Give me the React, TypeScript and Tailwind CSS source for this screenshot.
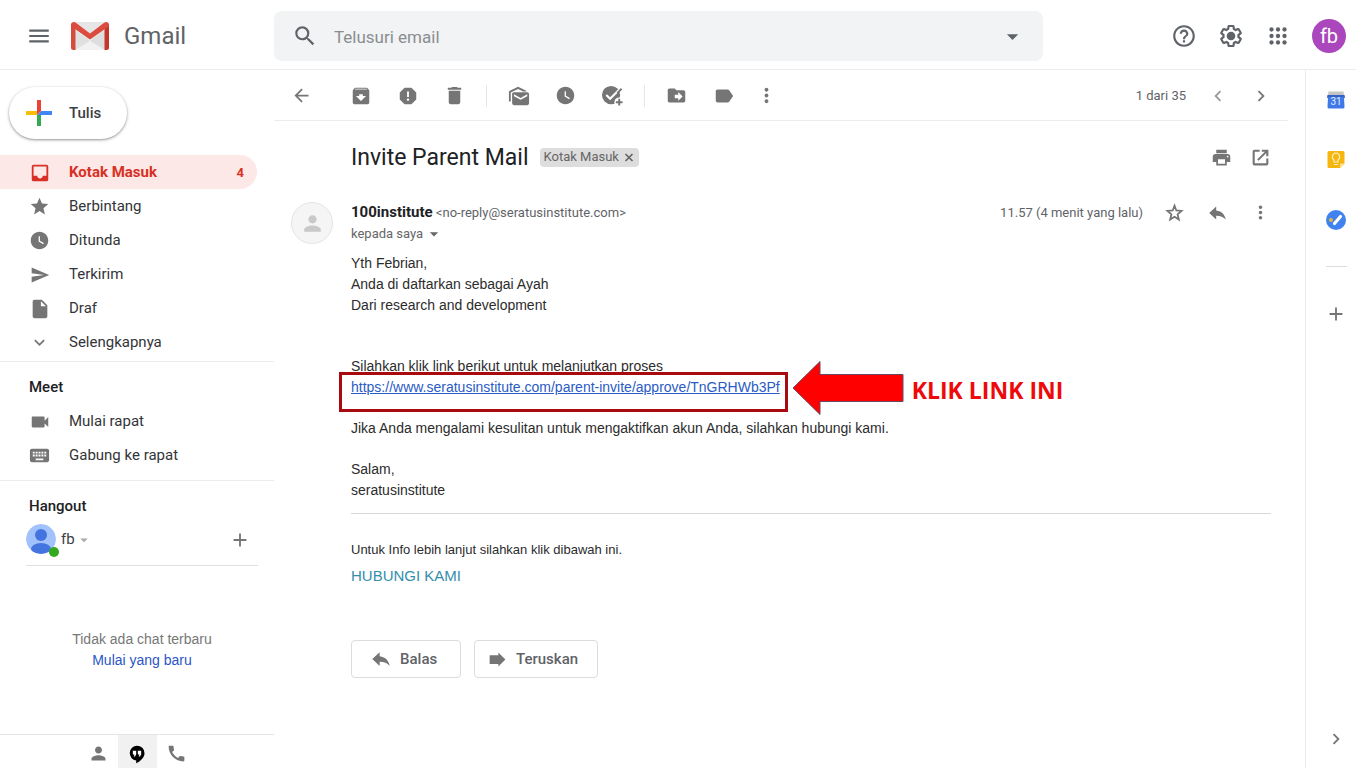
import type { ReactNode } from 'react';
import {
  MdAdd,
  MdArchive,
  MdArrowBack,
  MdArrowDropDown,
  MdCall,
  MdChevronLeft,
  MdChevronRight,
  MdDelete,
  MdDriveFileMove,
  MdExpandMore,
  MdHelpOutline,
  MdInbox,
  MdInsertDriveFile,
  MdKeyboard,
  MdLabel,
  MdMenu,
  MdMoreVert,
  MdPerson,
  MdPrint,
  MdReport,
  MdSearch,
  MdSend,
  MdStar,
  MdVideocam,
  MdWatchLater,
} from 'react-icons/md';

function GmailLogo() {
  return (
    <svg width="40" height="30" viewBox="0 0 40 30" aria-hidden="true">
      <path d="M3 1h34v28H3z" fill="#e6e6e6" />
      <path d="M5 29 20 17l15 12z" fill="#f2f2f2" />
      <path d="M5 9 20 20 5 29z" fill="#e0e0e0" />
      <path d="M35 9 20 20l15 9z" fill="#dedede" />
      <path d="M1 3.500v23A2.500 2.500 0 0 0 3.500 29H5.500V5z" fill="#d54b3d" />
      <path d="M39 3.500v23a2.500 2.500 0 0 1-2.500 2.500H34.500V5z" fill="#c5372c" />
      <path
        d="M1 3.500C1 1 4 .2 5.500 1.500L20 12.500 34.500 1.500C36 .2 39 1 39 3.500c0 1-.5 1.800-1.200 2.400L20 18.500 2.200 5.900C1.500 5.300 1 4.500 1 3.500z"
        fill="#dc4b3f"
      />
    </svg>
  );
}

function ComposePlus() {
  return (
    <svg width="26" height="26" viewBox="0 0 26 26" aria-hidden="true">
      <path d="M11 0h4v11l-4 4z" fill="#ea4335" />
      <path d="M0 11h11v4H0z" fill="#fbbc04" />
      <path d="M15 11h11v4H11z" fill="#4285f4" />
      <path d="M11 15h4v11h-4z" fill="#34a853" />
    </svg>
  );
}

function SettingsIcon() {
  return (
    <svg width="26" height="26" viewBox="0 0 24 24" fill="currentColor" aria-hidden="true">
      <path d="M13.850 22.250h-3.700c-.74 0-1.360-.54-1.450-1.270l-.27-1.890c-.27-.14-.53-.29-.79-.46l-1.800.72c-.7.26-1.470-.03-1.810-.65L2.200 15.530c-.35-.66-.2-1.440.36-1.880l1.530-1.190c-.01-.15-.02-.3-.02-.46 0-.15.01-.31.02-.46l-1.520-1.190c-.59-.45-.74-1.260-.37-1.880l1.850-3.190c.34-.62 1.110-.9 1.790-.63l1.810.73c.26-.17.52-.32.78-.46l.27-1.910c.09-.7.71-1.250 1.440-1.250h3.700c.74 0 1.360.54 1.450 1.270l.27 1.890c.27.14.53.29.79.46l1.800-.72c.71-.26 1.480.03 1.820.65l1.840 3.180c.36.66.2 1.440-.36 1.880l-1.520 1.190c.01.15.02.3.02.46s-.01.31-.02.46l1.520 1.190c.56.45.72 1.230.37 1.860l-1.860 3.220c-.34.62-1.110.9-1.800.63l-1.800-.72c-.26.17-.52.32-.78.46l-.27 1.910c-.1.68-.72 1.220-1.460 1.220zm-3.230-2h2.760l.37-2.550.53-.22c.44-.18.88-.44 1.340-.78l.45-.34 2.380.96 1.380-2.400-2.030-1.580.07-.56c.03-.26.06-.51.06-.78s-.03-.53-.06-.78l-.07-.56 2.030-1.580-1.390-2.400-2.390.96-.45-.35c-.42-.32-.87-.58-1.330-.77l-.52-.22-.37-2.550h-2.760l-.37 2.550-.53.21c-.44.19-.88.44-1.340.79l-.45.33-2.380-.95-1.390 2.390 2.030 1.580-.07.56a7 7 0 0 0-.06.79c0 .26.02.53.06.78l.07.56-2.030 1.580 1.380 2.400 2.390-.96.45.35c.43.33.86.58 1.330.77l.53.22.38 2.550z" />
      <circle cx="12" cy="12" r="4" />
    </svg>
  );
}

function AppsIcon() {
  return (
    <svg width="26" height="26" viewBox="0 0 24 24" fill="currentColor" aria-hidden="true">
      {[6, 12, 18].map((y) => [6, 12, 18].map((x) => <circle key={`${x}-${y}`} cx={x} cy={y} r="2" />))}
    </svg>
  );
}

function UnreadIcon() {
  return (
    <svg width="22" height="22" viewBox="0 0 24 24" fill="currentColor" aria-hidden="true">
      <path d="M1 8c0-.7.400-1.300 1-1.600L11 2l9 4.400V7h-3.500L11 4.300 3 8.200V18H1z" />
      <path d="M6.500 8h14.500a2 2 0 0 1 2 2v10a2 2 0 0 1-2 2H6.500a2 2 0 0 1-2-2V10c0-1.100.9-2 2-2zm14.500 4.200v-2l-7.200 4-7.300-4v2l7.300 4z" />
    </svg>
  );
}

function AddTaskIcon() {
  return (
    <svg width="23" height="23" viewBox="0 0 24 24" aria-hidden="true">
      <circle cx="10.500" cy="11.500" r="9.500" fill="currentColor" />
      <path d="M5.500 11.500 9.500 15.500 21 4" fill="none" stroke="#fff" strokeWidth="2.200" />
      <path d="m17 9.500 4.500-4.500" stroke="currentColor" strokeWidth="2" />
      <circle cx="19" cy="19" r="5" fill="#fff" />
      <path d="M19 15.500v7M15.500 19h7" stroke="currentColor" strokeWidth="2" />
    </svg>
  );
}

function OpenInNewIcon() {
  return (
    <svg width="21" height="21" viewBox="0 0 24 24" fill="none" stroke="currentColor" strokeWidth="2.400" aria-hidden="true">
      <path d="M11 4.200H5.200a1 1 0 0 0-1 1v13.600a1 1 0 0 0 1 1h13.600a1 1 0 0 0 1-1V13" />
      <path d="M13.500 4.200h6.300v6.300M19 5 9 15" />
    </svg>
  );
}

function StarOutlineIcon() {
  return (
    <svg width="21" height="21" viewBox="0 0 24 24" fill="none" stroke="currentColor" strokeWidth="2" aria-hidden="true">
      <path d="m12 4.200 2.100 5.500 6 .5-4.600 3.900 1.500 5.900-5-3.200-5 3.200 1.500-5.900-4.600-3.900 6-.5z" />
    </svg>
  );
}

function ReplyIcon() {
  return (
    <svg width="22" height="22" viewBox="0 0 24 24" fill="currentColor" aria-hidden="true">
      <path d="M10.500 9V4.500L2.500 12l8 7.500V15c5 0 8.300 1.300 11 4.500-1-5.300-4.200-9.700-11-10.500z" />
    </svg>
  );
}

function ForwardIcon() {
  return (
    <svg width="21" height="21" viewBox="0 0 24 24" fill="currentColor" aria-hidden="true">
      <path d="M3 7h10V4l8 8-8 8v-3H3z" />
    </svg>
  );
}

function CloseIcon() {
  return (
    <svg width="12" height="12" viewBox="0 0 12 12" aria-hidden="true">
      <path d="m2.500 3 7 7M9.500 3l-7 7" stroke="currentColor" strokeWidth="1.700" />
    </svg>
  );
}

function HangoutsIcon() {
  return (
    <svg width="20" height="20" viewBox="0 0 24 24" aria-hidden="true">
      <path d="M12 2a9 9 0 0 0-1 17.900V23c4.500-2 10-6.500 10-12A9 9 0 0 0 12 2z" fill="#000" />
      <path d="M7 8h4v4.500L9.500 15H8l1-2.500H7zM13 8h4v4.500L15.500 15H14l1-2.500h-2z" fill="#fff" />
    </svg>
  );
}

function HangoutAvatar() {
  return (
    <svg width="34" height="34" viewBox="0 0 34 34" aria-hidden="true">
      <clipPath id="hangout-avatar">
        <circle cx="15" cy="16" r="15" />
      </clipPath>
      <g clipPath="url(#hangout-avatar)">
        <circle cx="15" cy="16" r="15" fill="#a1c2fa" />
        <circle cx="15" cy="12" r="6" fill="#4374e0" />
        <ellipse cx="15" cy="26" rx="10" ry="6" fill="#4374e0" />
      </g>
      <circle cx="28" cy="29" r="5" fill="#34a81f" />
    </svg>
  );
}

function CalendarIcon() {
  return (
    <svg width="20" height="20" viewBox="0 0 20 20" aria-hidden="true">
      <path d="M2.500 1.500h15l.5 4H2z" fill="#c4c4c4" />
      <path d="M2 5h16a.8.8 0 0 1 .8.8V8H1.200V5.800A.8.8 0 0 1 2 5z" fill="#3261c9" />
      <path d="M2 7h16l.5 10a1.500 1.500 0 0 1-1.500 1.500H3A1.500 1.500 0 0 1 1.500 17z" fill="#3f79e8" />
      <text x="10" y="15" fontSize="10" fontFamily="Roboto, sans-serif" textAnchor="middle" fill="#e4edff">
        31
      </text>
    </svg>
  );
}

function KeepIcon() {
  return (
    <svg width="20" height="20" viewBox="0 0 20 20" aria-hidden="true">
      <path d="M3 1h14a1.500 1.500 0 0 1 1.500 1.500V13.500L14 18H3A1.500 1.500 0 0 1 1.500 16.500V2.500A1.500 1.500 0 0 1 3 1z" fill="#f5b70f" />
      <path d="M14 18v-4.500h4.500z" fill="#fde293" />
      <path
        d="M8 12v-2A3.700 3.700 0 1 1 12 10v2zM8 14.500h4"
        fill="none"
        stroke="#fdeebb"
        strokeWidth="1.200"
      />
    </svg>
  );
}

function TasksIcon() {
  return (
    <svg width="20" height="20" viewBox="0 0 20 20" aria-hidden="true">
      <circle cx="10" cy="10" r="10" fill="#4083f0" />
      <circle cx="5" cy="10" r="2" fill="#e6b53c" />
      <path d="m8.500 13.500 6-7" stroke="#fff" strokeWidth="3.200" strokeLinecap="round" />
    </svg>
  );
}

function PointerArrow() {
  return (
    <svg width="112" height="56" viewBox="0 0 112 56" aria-hidden="true">
      <path
        d="M1 28 28 1.500v13h83v27H28v13z"
        fill="#fe0000"
        stroke="#6a4a63"
        strokeWidth="1"
      />
    </svg>
  );
}

type IconButtonProps = { label: string; className?: string; children: ReactNode };

function IconButton({ label, className = 'w-[47px]', children }: IconButtonProps) {
  return (
    <button type="button" aria-label={label} className={`flex shrink-0 items-center justify-center ${className}`}>
      {children}
    </button>
  );
}

const folders = [
  { name: 'Kotak Masuk', icon: <MdInbox size={22} />, count: 4, active: true },
  { name: 'Berbintang', icon: <MdStar size={21} /> },
  { name: 'Ditunda', icon: <MdWatchLater size={21} /> },
  { name: 'Terkirim', icon: <MdSend size={20} /> },
  { name: 'Draf', icon: <MdInsertDriveFile size={22} /> },
  { name: 'Selengkapnya', icon: <MdExpandMore size={21} /> },
];

const meetItems = [
  { name: 'Mulai rapat', icon: <MdVideocam size={22} /> },
  { name: 'Gabung ke rapat', icon: <MdKeyboard size={23} /> },
];

type NavItem = { name: string; icon: ReactNode; count?: number; active?: boolean };

function NavRow({ item }: { item: NavItem }) {
  return (
    <a
      href="#"
      className={`flex h-[34px] items-center rounded-r-full pt-px pr-[13px] pl-7 ${
        item.active ? 'bg-[#fce8e6] font-bold text-[#d93025]' : 'text-[#333538]'
      }`}
    >
      <span className={`flex w-[23px] justify-center ${item.active ? '' : 'text-[#757575]'}`}>{item.icon}</span>
      <span className="ml-[18px] flex-1 text-[15px]">{item.name}</span>
      {item.count && <span className="text-[13px]">{item.count}</span>}
    </a>
  );
}

function Header() {
  return (
    <header className="flex h-[70px] shrink-0 items-center border-b border-[#ececec]">
      <div className="flex w-[274px] shrink-0 items-center pt-[3px]">
        <IconButton label="Menu utama" className="ml-[26px] w-[26px] text-[#5f6368]">
          <MdMenu size={26} />
        </IconButton>
        <a href="#" className="ml-[18px] flex items-center gap-[14px] text-[24px] text-[#5f6368]">
          <GmailLogo />
          Gmail
        </a>
      </div>
      <form className="mt-[3px] flex h-[50px] max-w-[769px] flex-1 items-center rounded-lg bg-[#f1f3f4] text-[#5f6368]">
        <IconButton label="Telusuri" className="ml-[18px] w-[26px]">
          <MdSearch size={26} />
        </IconButton>
        <input
          type="text"
          aria-label="Telusuri email"
          placeholder="Telusuri email"
          className="ml-4 min-w-0 flex-1 bg-transparent pt-[3px] text-[17px] outline-none placeholder:text-[#8b8d90]"
        />
        <IconButton label="Opsi penelusuran" className="mr-[17px] w-[27px]">
          <MdArrowDropDown size={27} />
        </IconButton>
      </form>
      <div className="ml-auto flex shrink-0 items-center pt-[3px] pr-[10px] text-[#5f6368]">
        <IconButton label="Dukungan">
          <MdHelpOutline size={26} />
        </IconButton>
        <IconButton label="Setelan">
          <SettingsIcon />
        </IconButton>
        <IconButton label="Aplikasi Google">
          <AppsIcon />
        </IconButton>
        <button type="button" className="ml-[11px] size-[34px] rounded-full bg-[#ab47bc] text-[20px] text-white">
          fb
        </button>
      </div>
    </header>
  );
}

function Sidebar() {
  return (
    <aside className="flex w-[274px] shrink-0 flex-col">
      <button
        type="button"
        className="mt-[17px] ml-[9px] flex h-[52px] w-[118px] shrink-0 items-center rounded-full bg-white pl-[17px] text-[15px] font-medium text-[#3c4043] shadow-[0_1px_2px_rgba(60,64,67,0.4),0_1px_3px_1px_rgba(60,64,67,0.15)]"
      >
        <ComposePlus />
        <span className="ml-[17px]">Tulis</span>
      </button>

      <nav className="mt-4 mr-[17px]">
        {folders.map((folder) => (
          <NavRow key={folder.name} item={folder} />
        ))}
      </nav>

      <section className="mt-[2px] border-t border-[#ececec] pt-[14px]">
        <h2 className="mb-[6px] pl-[29px] text-[15px] leading-[22px] font-medium text-[#202124]">Meet</h2>
        {meetItems.map((item) => (
          <NavRow key={item.name} item={item} />
        ))}
      </section>

      <section className="mt-2 border-t border-[#ececec] pt-[14px]">
        <h2 className="pl-[29px] text-[15px] leading-[22px] font-medium text-[#202124]">Hangout</h2>
        <div className="mr-4 ml-[26px] flex h-[49px] items-center border-b border-[#e0e0e0] pb-[3px]">
          <button type="button" className="flex items-center text-[15px] text-[#3c4043]">
            <HangoutAvatar />
            <span className="ml-px">fb</span>
            <MdArrowDropDown size={18} className="text-[#aaa]" />
          </button>
          <IconButton label="Percakapan baru" className="mr-[7px] ml-auto w-[22px] text-[#757575]">
            <MdAdd size={22} />
          </IconButton>
        </div>
      </section>

      <div className="mt-[63px] pl-[10px] text-center font-['Liberation_Sans',Arial,sans-serif] text-[14px] leading-[21px]">
        <p className="text-[#777]">Tidak ada chat terbaru</p>
        <a href="#" className="text-[#2a56c6]">
          Mulai yang baru
        </a>
      </div>

      <div className="mt-auto flex h-[34px] shrink-0 justify-center border-t border-[#e5e5e5] text-[#757575]">
        <IconButton label="Kontak" className="w-[39px] pt-1">
          <MdPerson size={21} />
        </IconButton>
        <IconButton label="Percakapan Hangouts" className="w-[39px] bg-[#f1f1f1] pt-1">
          <HangoutsIcon />
        </IconButton>
        <IconButton label="Panggilan telepon" className="w-[39px] pt-1">
          <MdCall size={21} />
        </IconButton>
      </div>
    </aside>
  );
}

function Toolbar() {
  return (
    <div className="mr-[17px] flex h-[51px] shrink-0 items-center border-b border-[#ececec] pt-px pr-[6px] pl-1 text-[#757575]">
      <IconButton label="Kembali ke Kotak Masuk">
        <MdArrowBack size={21} />
      </IconButton>
      <div className="ml-3 flex">
        <IconButton label="Arsipkan">
          <MdArchive size={22} />
        </IconButton>
        <IconButton label="Laporkan spam">
          <MdReport size={22} />
        </IconButton>
        <IconButton label="Hapus">
          <MdDelete size={23} />
        </IconButton>
      </div>
      <span className="mx-2 h-[22px] w-px bg-[#e6e6e6]" />
      <div className="flex">
        <IconButton label="Tandai belum dibaca">
          <UnreadIcon />
        </IconButton>
        <IconButton label="Tunda">
          <MdWatchLater size={21} />
        </IconButton>
        <IconButton label="Tambahkan ke Tasks">
          <AddTaskIcon />
        </IconButton>
      </div>
      <span className="mx-2 h-[22px] w-px bg-[#e6e6e6]" />
      <div className="flex">
        <IconButton label="Pindahkan ke">
          <MdDriveFileMove size={21} />
        </IconButton>
        <IconButton label="Label">
          <MdLabel size={22} />
        </IconButton>
        <IconButton label="Lainnya" className="w-[38px]">
          <MdMoreVert size={23} />
        </IconButton>
      </div>
      <div className="ml-auto flex items-center">
        <span className="mr-[10px] text-[13px] text-[#5f6368]">1 dari 35</span>
        <IconButton label="Lebih baru" className="w-[43px] text-[#9a9a9a]">
          <MdChevronLeft size={22} />
        </IconButton>
        <IconButton label="Lebih lama" className="w-[43px]">
          <MdChevronRight size={22} />
        </IconButton>
      </div>
    </div>
  );
}

function MessageBody() {
  return (
    <div className="mt-[9px] font-['Liberation_Sans',Arial,sans-serif] text-[14px] leading-[21px] text-[#2c2c2c]">
      <p>Yth Febrian,</p>
      <p>Anda di daftarkan sebagai Ayah</p>
      <p>Dari research and development</p>
      <p className="mt-10">Silahkan klik link berikut untuk melanjutkan proses</p>
      <div className="relative w-fit">
        <a href="#" className="text-[#2a5bc6] underline">
          https://www.seratusinstitute.com/parent-invite/approve/TnGRHWb3Pf
        </a>
        {/* Annotation drawn over the message */}
        <div className="pointer-events-none absolute -top-[5px] -right-2 -left-3 h-10 border-[3px] border-[#a80a10]" />
        <div className="pointer-events-none absolute -top-[17px] left-full ml-3 flex items-center gap-2">
          <PointerArrow />
          <span className="pt-1 font-['Open_Sans',sans-serif] text-[23px] font-bold whitespace-nowrap text-[#ee0a0a]">
            KLIK LINK INI
          </span>
        </div>
      </div>
      <p className="mt-5">Jika Anda mengalami kesulitan untuk mengaktifkan akun Anda, silahkan hubungi kami.</p>
      <p className="mt-5">Salam,</p>
      <p>seratusinstitute</p>
      <hr className="mt-3 border-[#d8d8d8]" />
      <p className="mt-[25px] text-[13px]">Untuk Info lebih lanjut silahkan klik dibawah ini.</p>
      <a href="#" className="mt-[5px] block w-fit text-[15px] text-[#348eac]">
        HUBUNGI KAMI
      </a>
    </div>
  );
}

function Message() {
  return (
    <article className="pr-[34px] pl-[17px]">
      <div className="mt-[18px] flex h-9 items-center pl-[60px]">
        <h1 className="pt-[2px] text-[23px] text-[#202124]">Invite Parent Mail</h1>
        <span className="ml-[11px] flex h-[19px] items-center gap-1 rounded bg-[#ddd] px-1 text-[13px] text-[#666]">
          Kotak Masuk
          <button type="button" aria-label="Hapus label Kotak Masuk">
            <CloseIcon />
          </button>
        </span>
        <div className="ml-auto flex gap-[18px] text-[#757575]">
          <IconButton label="Cetak semua" className="w-[21px]">
            <MdPrint size={21} />
          </IconButton>
          <IconButton label="Di jendela baru" className="w-[21px]">
            <OpenInNewIcon />
          </IconButton>
        </div>
      </div>

      <div className="mt-[27px] flex gap-[18px]">
        <div className="flex size-[42px] shrink-0 items-center justify-center rounded-full border border-[#e4e4e4] bg-[#f5f5f5] text-[#c9c9c9]">
          <MdPerson size={25} />
        </div>
        <div className="min-w-0 flex-1">
          <div className="flex h-[21px] items-center">
            <p className="text-[13px] text-[#5f6368]">
              <span className="text-[15px] font-bold text-[#202124]">100institute</span>{' '}
              &lt;no-reply@seratusinstitute.com&gt;
            </p>
            <span className="ml-auto text-[13px] text-[#5f6368]">11.57 (4 menit yang lalu)</span>
            <div className="ml-[21px] flex gap-[22px] text-[#757575]">
              <IconButton label="Beri bintang" className="w-[21px]">
                <StarOutlineIcon />
              </IconButton>
              <IconButton label="Balas" className="w-[21px]">
                <ReplyIcon />
              </IconButton>
              <IconButton label="Lainnya" className="w-[21px]">
                <MdMoreVert size={23} />
              </IconButton>
            </div>
          </div>
          <button type="button" className="flex h-[21px] items-center gap-px text-[13px] text-[#666]">
            kepada saya
            <MdArrowDropDown size={20} />
          </button>
          <MessageBody />
          <div className="mt-[54px] flex gap-[13px] text-[15px] font-medium text-[#5f6368]">
            <button type="button" className="flex h-[38px] w-[110px] items-center rounded border border-[#dadce0] pl-[18px]">
              <span className="text-[#757575]">
                <ReplyIcon />
              </span>
              <span className="ml-2">Balas</span>
            </button>
            <button type="button" className="flex h-[38px] w-[124px] items-center rounded border border-[#dadce0] pl-3">
              <span className="text-[#757575]">
                <ForwardIcon />
              </span>
              <span className="ml-2">Teruskan</span>
            </button>
          </div>
        </div>
      </div>
    </article>
  );
}

function SidePanel() {
  return (
    <aside className="flex w-[51px] shrink-0 flex-col items-center border-l border-[#ececec] pt-5 pb-[18px] pl-[10px] text-[#757575]">
      <div className="flex flex-col gap-10">
        <IconButton label="Kalender" className="size-5">
          <CalendarIcon />
        </IconButton>
        <IconButton label="Keep" className="size-5">
          <KeepIcon />
        </IconButton>
        <IconButton label="Tasks" className="size-5">
          <TasksIcon />
        </IconButton>
      </div>
      <hr className="mt-9 mb-9 w-[21px] border-[#dadce0]" />
      <IconButton label="Dapatkan add-on" className="w-[22px]">
        <MdAdd size={22} />
      </IconButton>
      <IconButton label="Sembunyikan panel samping" className="mt-auto w-[22px]">
        <MdChevronRight size={22} />
      </IconButton>
    </aside>
  );
}

function App() {
  return (
    <div className="flex h-screen flex-col bg-white font-[Roboto,'Liberation_Sans',sans-serif]">
      <Header />
      <div className="flex min-h-0 flex-1">
        <Sidebar />
        <main className="flex min-w-0 flex-1 flex-col">
          <Toolbar />
          <Message />
        </main>
        <SidePanel />
      </div>
    </div>
  );
}

export default App;
